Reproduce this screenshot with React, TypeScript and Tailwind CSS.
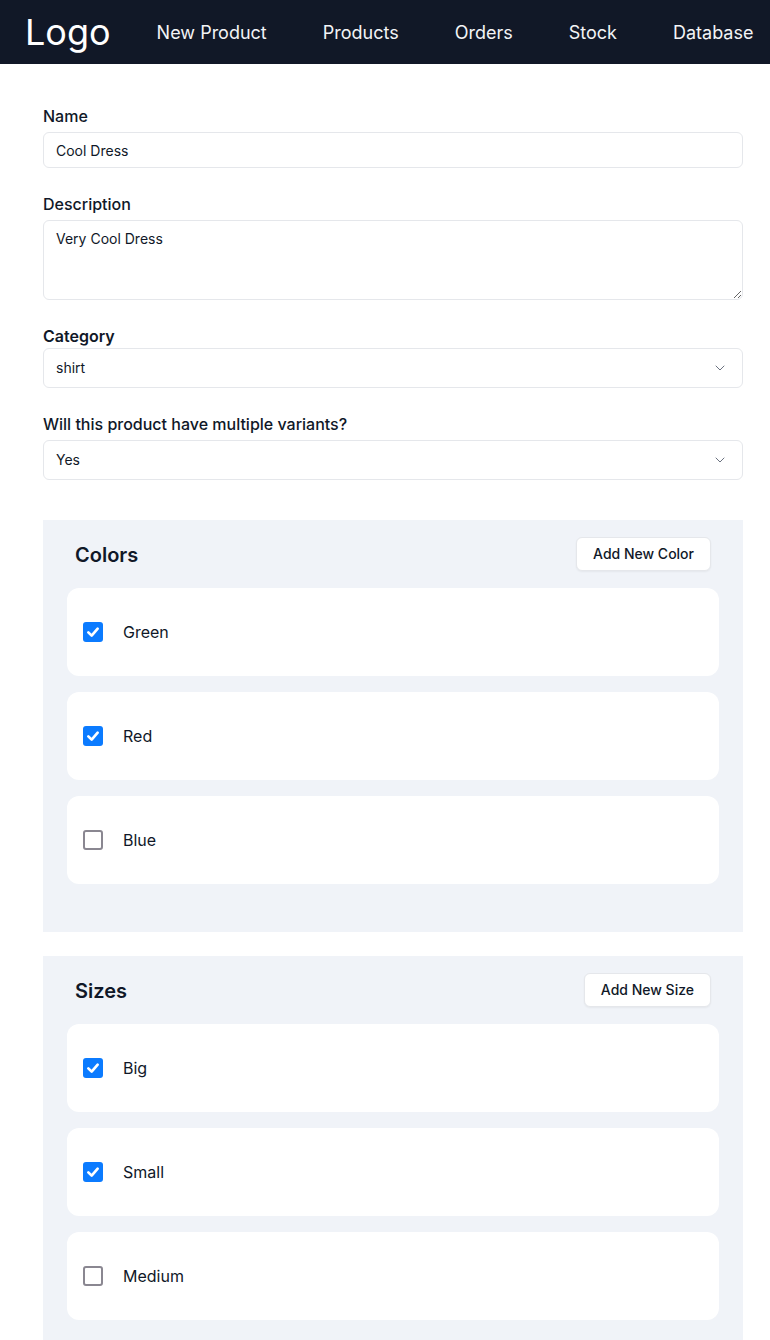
import { useState } from "react"

type Option = { label: string; checked: boolean }

const NAV = ["New Product", "Products", "Orders", "Stock", "Database"]

const ChevronDown = () => (
    <svg width="16" height="16" viewBox="0 0 24 24" fill="none" stroke="#6b7280" strokeWidth="1.5" strokeLinecap="round" strokeLinejoin="round">
        <path d="m6 9 6 6 6-6" />
    </svg>
)

const Checkbox = ({ checked, onChange }: { checked: boolean; onChange: () => void }) => (
    <button
        type="button"
        onClick={onChange}
        className={
            checked
                ? "flex h-5 w-5 items-center justify-center rounded-[3px] bg-[#0b7bff]"
                : "h-5 w-5 rounded-[3px] border-2 border-[#8a8791] bg-white"
        }
    >
        {checked && (
            <svg width="16" height="16" viewBox="0 0 24 24" fill="none" stroke="white" strokeWidth="4" strokeLinecap="round" strokeLinejoin="round">
                <path d="M5 12.5 10 17.5 19 7" />
            </svg>
        )}
    </button>
)

const VariantSection = ({ title, button, initial }: { title: string; button: string; initial: Option[] }) => {
    const [items, setItems] = useState(initial)
    return (
        <section className="bg-[#f0f3f8] px-6 pt-[17px] pb-12">
            {/* HEADER */}
            <div className="flex items-center justify-between px-2">
                <h2 className="mt-0.5 text-xl font-semibold text-gray-900">{title}</h2>
                <button className="h-[34px] rounded-md border border-gray-200 bg-white px-4 text-sm font-medium text-gray-900 shadow-xs">
                    {button}
                </button>
            </div>
            {/* OPTIONS */}
            <div className="mt-[17px] flex flex-col gap-4">
                {items.map((item, i) => (
                    <div key={item.label} className="flex h-[88px] items-center gap-5 rounded-xl bg-white px-4">
                        <Checkbox
                            checked={item.checked}
                            onChange={() =>
                                setItems(items.map((it, j) => (j === i ? { ...it, checked: !it.checked } : it)))
                            }
                        />
                        <span className="text-base text-gray-900">{item.label}</span>
                    </div>
                ))}
            </div>
        </section>
    )
}

const App = () => {
    return (
        <div className="min-h-[1340px] bg-white font-['Inter',sans-serif] text-gray-900">
            {/* NAVBAR */}
            <nav className="flex h-16 items-center overflow-hidden whitespace-nowrap bg-[#111827] pl-[25px] text-white">
                <span className="text-4xl leading-none">Logo</span>
                <div className="ml-[46px] mt-0.5 flex items-center gap-[56px] text-lg text-gray-100">
                    {NAV.map((n) => (
                        <a key={n} href="#">{n}</a>
                    ))}
                </div>
            </nav>

            {/* FORM */}
            <form className="ml-[43px] w-[700px] pt-10">
                <label className="block text-base font-medium">Name</label>
                <input
                    defaultValue="Cool Dress"
                    className="mt-1 block h-9 w-full rounded-md border border-gray-200 px-3 text-sm outline-none"
                />

                <label className="mt-6 block text-base font-medium">Description</label>
                <textarea
                    defaultValue="Very Cool Dress"
                    className="mt-1 block h-20 w-full rounded-md border border-gray-200 px-3 py-2 text-sm outline-none"
                />

                <label className="mt-6 block text-base font-semibold">Category</label>
                <div className="flex h-10 w-full items-center justify-between rounded-md border border-gray-200 pl-3 pr-3.5 text-sm">
                    <span>shirt</span>
                    <ChevronDown />
                </div>

                <label className="mt-6 block text-base font-medium">Will this product have multiple variants?</label>
                <div className="mt-1 flex h-10 w-full items-center justify-between rounded-md border border-gray-200 pl-3 pr-3.5 text-sm">
                    <span>Yes</span>
                    <ChevronDown />
                </div>

                <div className="mt-10 flex flex-col gap-6">
                    <VariantSection
                        title="Colors"
                        button="Add New Color"
                        initial={[
                            { label: "Green", checked: true },
                            { label: "Red", checked: true },
                            { label: "Blue", checked: false },
                        ]}
                    />
                    <VariantSection
                        title="Sizes"
                        button="Add New Size"
                        initial={[
                            { label: "Big", checked: true },
                            { label: "Small", checked: true },
                            { label: "Medium", checked: false },
                        ]}
                    />
                </div>
            </form>
        </div>
    )
}

export default App
